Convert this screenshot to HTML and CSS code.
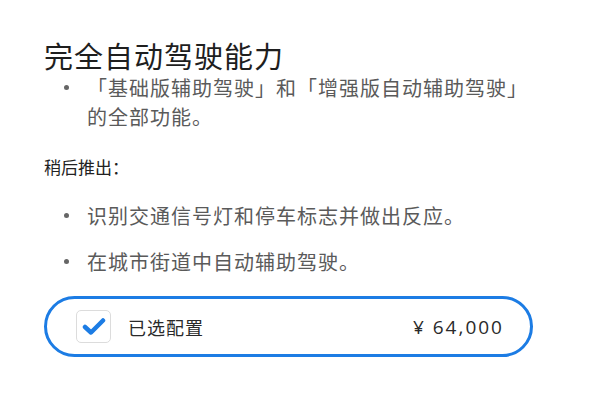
FILE: index.html
```html
<!DOCTYPE html>
<html lang="zh-CN">
<head>
    <meta charset="UTF-8">
    <meta name="viewport" content="width=device-width, initial-scale=1.0">
    <title>完全自动驾驶能力</title>
    <link rel="stylesheet" href="styles.css">
</head>
<body>
    <div class="panel">
        <h1>完全自动驾驶能力</h1>
        <ul class="features">
            <li><span>「基础版辅助驾驶」和「增强版自动辅助驾驶」的全部功能。</span></li>
        </ul>
        <p class="later">稍后推出：</p>
        <ul class="features upcoming">
            <li><span>识别交通信号灯和停车标志并做出反应。</span></li>
            <li><span>在城市街道中自动辅助驾驶。</span></li>
        </ul>
        <label class="option">
            <span class="checkbox">
                <svg width="24" height="17" viewBox="0 0 24 17">
                    <path d="M3 9 L9 14.5 L21 2.5" fill="none" stroke="#1c7ce4" stroke-width="4.5" stroke-linecap="round" stroke-linejoin="round"/>
                </svg>
            </span>
            <span class="option-name">已选配置</span>
            <span class="price">¥ 64,000</span>
        </label>
    </div>
</body>
</html>
```

FILE: styles.css
```css
body {
    margin: 0;
    padding: 0;
    background: #fff;
    font-family: "Noto Sans CJK SC", "Noto Sans", sans-serif;
    color: #222;
}
.panel {
    width: 490px;
    padding: 37px 0 0 44px;
}
h1 {
    margin: 0;
    font-size: 29px;
    line-height: 36px;
    font-weight: normal;
    letter-spacing: 1px;
    color: #1e1e1e;
}
.features {
    list-style: none;
    margin: 0;
    padding: 0;
    font-size: 20px;
    line-height: 29px;
    color: #5a5a5a;
    letter-spacing: 1px;
}
.features li {
    display: flex;
}
.features li::before {
    content: "";
    flex: none;
    width: 5px;
    height: 5px;
    border-radius: 50%;
    background: #666;
    margin: 12px 18px 0 20px;
}
.upcoming {
    margin-top: 22px;
    display: flex;
    flex-direction: column;
    gap: 17px;
}
.later {
    margin: 24px 0 0;
    font-size: 17px;
    line-height: 24px;
    color: #222;
}
.option {
    margin-top: 20px;
    box-sizing: border-box;
    width: 489px;
    height: 61px;
    border: 3px solid #1c7ce4;
    border-radius: 31px;
    display: flex;
    align-items: center;
    padding: 0 28px 0 29px;
}
.checkbox {
    box-sizing: border-box;
    width: 35px;
    height: 33px;
    border: 1px solid #dcdcdc;
    border-radius: 5px;
    display: flex;
    align-items: center;
    justify-content: center;
    margin-right: 17px;
}
.option-name {
    font-size: 18px;
    letter-spacing: 1px;
    color: #2a2a2a;
    flex: 1;
}
.price {
    font-family: "Open Sans", "Liberation Sans", sans-serif;
    font-size: 19px;
    color: #2a2a2a;
    letter-spacing: 2px;
    margin-right: -2px;
}
```
